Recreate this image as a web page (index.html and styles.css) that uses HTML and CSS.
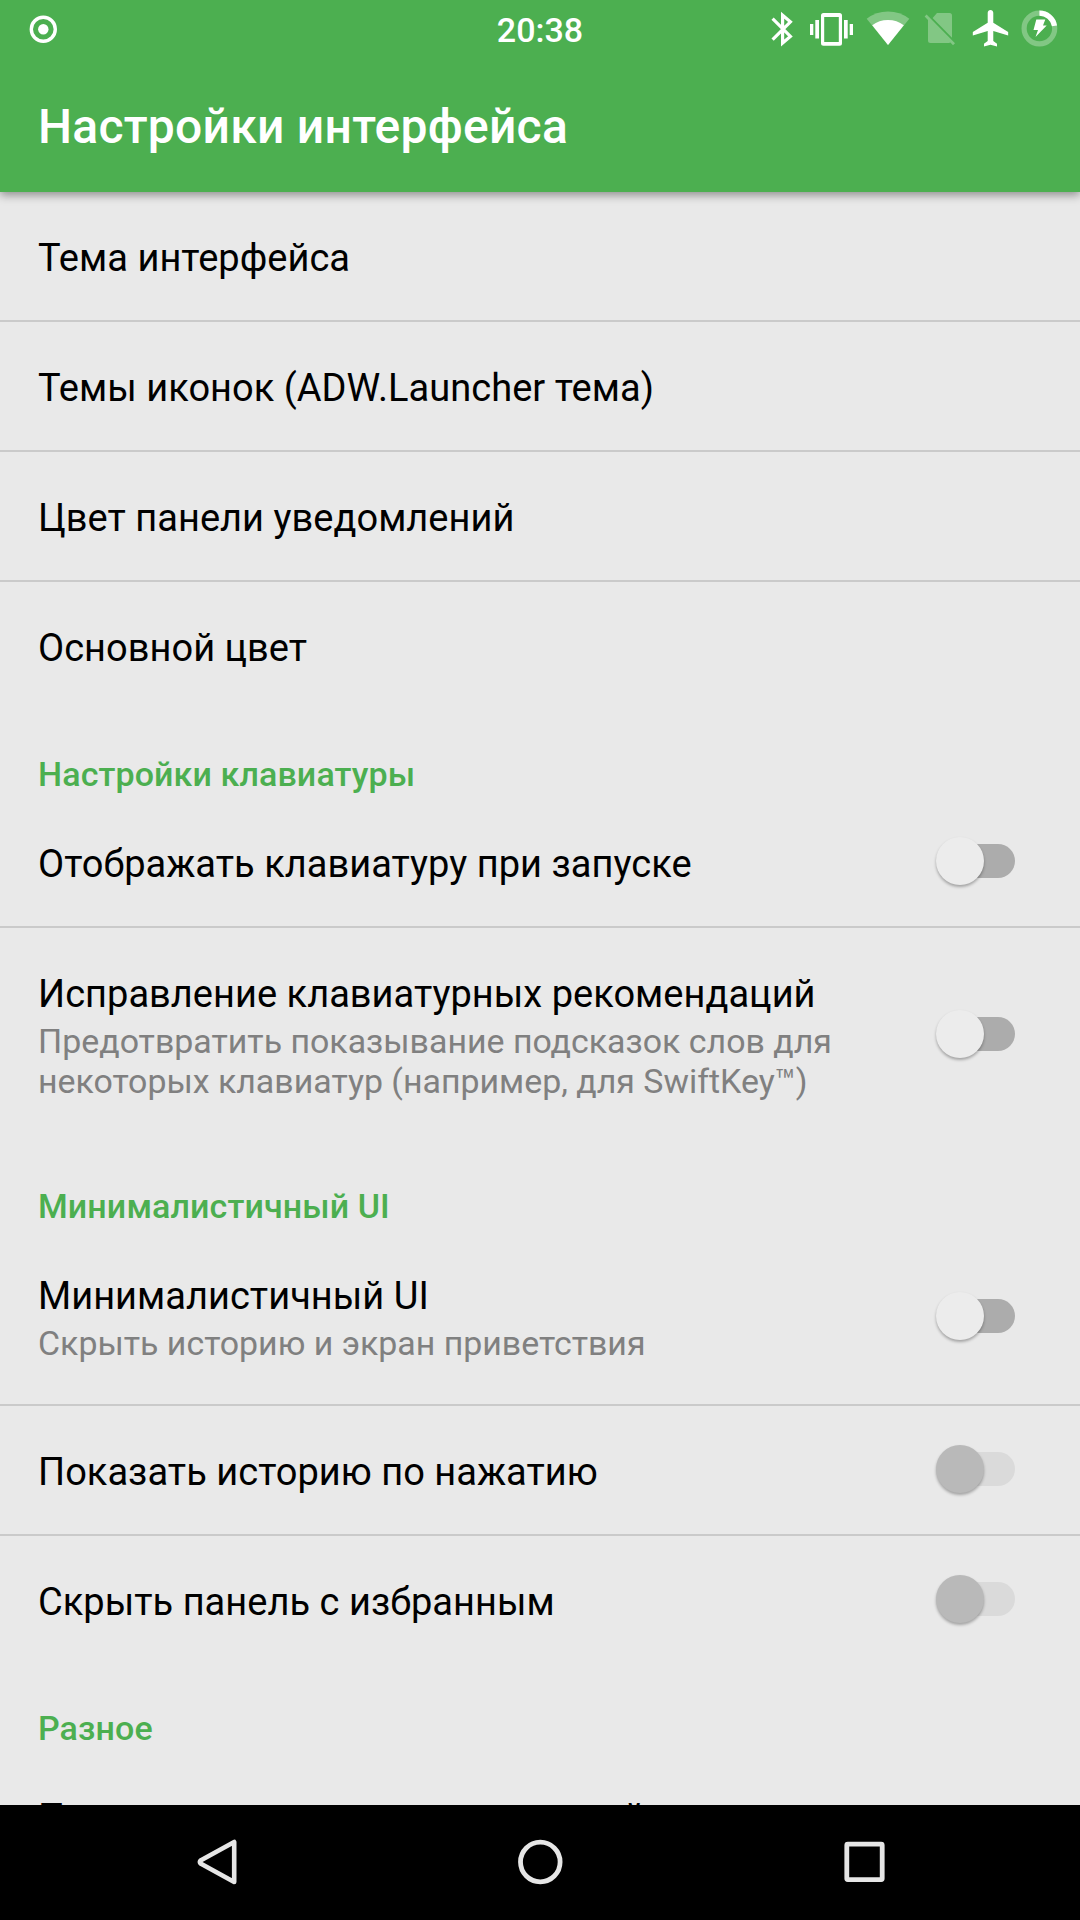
FILE: index.html
```html
<!DOCTYPE html>
<html lang="ru">
<head>
    <meta charset="UTF-8">
    <meta name="viewport" content="width=device-width, initial-scale=1.0">
    <title>Настройки интерфейса</title>
    <link rel="stylesheet" href="styles.css">
</head>
<body>
    <header class="app-bar">
        <div class="status-bar">
            <div class="status-left">
                <svg width="28" height="60" viewBox="0 0 28 60">
                    <circle cx="14.3" cy="29.3" r="12" fill="none" stroke="#fff" stroke-width="3.4"/>
                    <circle cx="14.3" cy="29.3" r="5.2" fill="#fff"/>
                </svg>
            </div>
            <div class="clock">20:38</div>
            <div class="status-icons">
                <!-- bluetooth -->
                <svg width="48" height="60" viewBox="0 0 48 60">
                    <path d="M14.6 18.6L32.4 36.4L24.6 43V15.2L32.4 21.8L14.6 39.6" fill="none" stroke="#fff" stroke-width="3.2"/>
                </svg>
                <!-- vibrate -->
                <svg width="52" height="60" viewBox="0 0 52 60">
                    <path fill="#fff" fill-rule="evenodd" d="M17.5 13h16a2.5 2.5 0 0 1 2.5 2.5v27.7a2.5 2.5 0 0 1-2.5 2.5h-16a2.5 2.5 0 0 1-2.5-2.5V15.5a2.5 2.5 0 0 1 2.5-2.5zM18.2 17v25h14.6V17z"/>
                    <path fill="#fff" d="M4 24h3.3v11H4zM9.3 20h3.7v18.5H9.3zM38 20h3.7v18.5H38zM43.7 24H47v11h-3.3z"/>
                </svg>
                <!-- wifi -->
                <svg width="58" height="60" viewBox="0 0 58 60">
                    <path fill="#fff" fill-opacity=".3" d="M30 45L8.7 18.8Q18 11.5 30 11.5T51.3 18.8z"/>
                    <path fill="#fff" d="M30 45L14.2 25.2Q21 20 30 20T45.8 25.2z"/>
                </svg>
                <!-- no sim -->
                <svg width="48" height="60" viewBox="0 0 48 60">
                    <g fill="#fff" fill-opacity=".3">
                        <path d="M21 13h12.5a2.5 2.5 0 0 1 2.5 2.5v22.2L16.6 18.1z"/>
                        <path d="M10.6 14.6L39 43.2l-2 2L34.4 42.6Q33.8 43 33 43H14.5A2.5 2.5 0 0 1 12 40.5V20L8.6 16.6z"/>
                    </g>
                </svg>
                <!-- airplane mode -->
                <svg width="50" height="60" viewBox="0 0 50 60">
                    <path transform="translate(5.1 6.3) scale(1.86 1.83)" fill="#fff" d="M21 16v-2l-8-5V3.5C13 2.67 12.33 2 11.5 2S10 2.67 10 3.5V9l-8 5v2l8-2.5V19l-2 1.5V22l3.5-1 3.5 1v-1.5L13 19v-5.5l8 2.5z"/>
                </svg>
                <!-- battery charging -->
                <svg width="50" height="60" viewBox="0 0 50 60">
                    <circle cx="25.4" cy="28.5" r="15.3" fill="none" stroke="#fff" stroke-opacity=".3" stroke-width="5.2"/>
                    <path d="M25.4 13.2A15.3 15.3 0 0 1 40.5 25.9" fill="none" stroke="#fff" stroke-width="5.2"/>
                    <path d="M22.3 19.5h9l-2.3 6h3.7L21.5 37l2.5-7h-4.5z" fill="#fff"/>
                </svg>
            </div>
        </div>
        <h1>Настройки интерфейса</h1>
    </header>

    <main class="settings">
        <div class="row divider">
            <div class="title">Тема интерфейса</div>
        </div>
        <div class="row divider">
            <div class="title">Темы иконок (ADW.Launcher тема)</div>
        </div>
        <div class="row divider">
            <div class="title">Цвет панели уведомлений</div>
        </div>
        <div class="row">
            <div class="title">Основной цвет</div>
        </div>

        <h2>Настройки клавиатуры</h2>
        <div class="row divider">
            <div class="title">Отображать клавиатуру при запуске</div>
            <div class="switch"></div>
        </div>
        <div class="row">
            <div class="text">
                <div class="title">Исправление клавиатурных рекомендаций</div>
                <div class="summary">Предотвратить показывание подсказок слов для<br>некоторых клавиатур (например, для SwiftKey™)</div>
            </div>
            <div class="switch"></div>
        </div>

        <h2>Минималистичный UI</h2>
        <div class="row divider">
            <div class="text">
                <div class="title">Минималистичный UI</div>
                <div class="summary">Скрыть историю и экран приветствия</div>
            </div>
            <div class="switch"></div>
        </div>
        <div class="row divider">
            <div class="title">Показать историю по нажатию</div>
            <div class="switch disabled"></div>
        </div>
        <div class="row">
            <div class="title">Скрыть панель с избранным</div>
            <div class="switch disabled"></div>
        </div>

        <h2>Разное</h2>
        <div class="row">
            <div class="title">Показывать панель уведомлений</div>
        </div>
    </main>

    <nav class="nav-bar">
        <svg width="60" height="60" viewBox="0 0 60 60">
            <path d="M48.2 10V50L15 31.8Q12.6 30 15 28.2z" fill="none" stroke="#e6e6e6" stroke-width="4.6" stroke-linejoin="round"/>
        </svg>
        <svg width="60" height="60" viewBox="0 0 60 60">
            <circle cx="30.3" cy="30" r="19.8" fill="none" stroke="#e6e6e6" stroke-width="4.8"/>
        </svg>
        <svg width="60" height="60" viewBox="0 0 60 60">
            <rect x="12.8" y="12.2" width="35.4" height="35.4" rx="1" fill="none" stroke="#e6e6e6" stroke-width="4.8"/>
        </svg>
    </nav>
</body>
</html>
```
FILE: styles.css
```css
* {
    box-sizing: border-box;
}
body {
    margin: 0;
    height: 1920px;
    display: flex;
    flex-direction: column;
    overflow: hidden;
    background: #e9e9e9;
    color: #000;
    font-family: Roboto, sans-serif;
}
.app-bar {
    flex: none;
    height: 192px;
    background: #4caf50;
    color: #fff;
    z-index: 1;
    box-shadow: 0 3px 9px rgba(0, 0, 0, 0.4);
}
.status-bar {
    display: grid;
    grid-template-columns: 1fr auto 1fr;
    height: 60px;
}
.status-left {
    padding-left: 29px;
}
.clock {
    font-size: 34px;
    font-weight: 500;
    line-height: 60px;
}
.status-icons {
    display: flex;
    justify-content: flex-end;
    padding-right: 16px;
}
svg {
    display: block;
    flex: none;
}
h1 {
    margin: 0;
    padding: 0 38px;
    font-size: 48px;
    font-weight: 500;
    line-height: 134px;
    letter-spacing: 0.25px;
}
.settings {
    flex: 1;
    min-height: 0;
    overflow: hidden;
}
.row {
    display: flex;
    align-items: center;
    justify-content: space-between;
    min-height: 130px;
    padding: 42px 65px 40px 38px;
}
.divider {
    border-bottom: 2px solid #cacaca;
    padding-bottom: 38px;
}
.title {
    font-size: 38px;
    line-height: 48px;
    letter-spacing: 0.03px;
    white-space: nowrap;
}
.summary {
    margin: 4px 0 2px;
    font-size: 33.9px;
    line-height: 40px;
    color: #808080;
    white-space: nowrap;
}
h2 {
    margin: 0;
    height: 86px;
    padding: 42px 38px 0;
    font-size: 34px;
    font-weight: 500;
    line-height: 40px;
    letter-spacing: 0.1px;
    color: #4caf50;
}
.switch {
    position: relative;
    top: -3px;
    flex: none;
    width: 74px;
    height: 34px;
    border-radius: 17px;
    background: #acacac;
}
.switch::before {
    content: "";
    position: absolute;
    left: -5px;
    top: -7px;
    width: 48px;
    height: 48px;
    border-radius: 50%;
    background: #ececec;
    box-shadow: 0 2px 3px rgba(0, 0, 0, 0.3);
}
.switch.disabled {
    background: #dadada;
}
.switch.disabled::before {
    background: #b9b9b9;
}
.nav-bar {
    flex: none;
    display: flex;
    justify-content: space-around;
    align-items: center;
    height: 115px;
    padding: 0 54px 1px;
    background: #000;
}
```
